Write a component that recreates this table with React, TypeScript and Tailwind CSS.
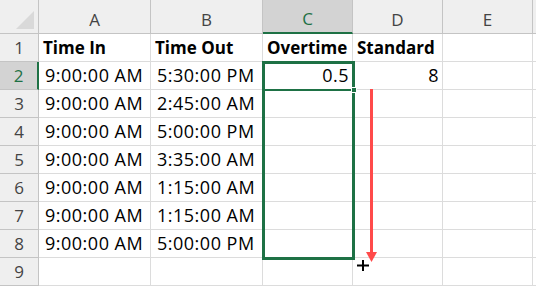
import React from 'react'

const cols = ['A', 'B', 'C', 'D', 'E']

const rows: string[][] = [
  ['Time In', 'Time Out', 'Overtime', 'Standard', ''],
  ['9:00:00 AM', '5:30:00 PM', '0.5', '8', ''],
  ['9:00:00 AM', '2:45:00 AM', '', '', ''],
  ['9:00:00 AM', '5:00:00 PM', '', '', ''],
  ['9:00:00 AM', '3:35:00 AM', '', '', ''],
  ['9:00:00 AM', '1:15:00 AM', '', '', ''],
  ['9:00:00 AM', '1:15:00 AM', '', '', ''],
  ['9:00:00 AM', '5:00:00 PM', '', '', ''],
  ['', '', '', '', ''],
]

// numeric cells are right aligned like Excel
const isNumber = (v: string) => /^[0-9.]+$/.test(v)

export default function App() {
  return (
    <div
      className="relative w-[536px] h-[286px] overflow-hidden bg-white text-[17px] text-black"
      style={{ fontFamily: '"Open Sans", "Noto Sans", sans-serif' }}
    >
      <div className="grid grid-cols-[39px_112px_112px_90px_90px_90px_1fr]">
        {/* header row */}
        <div className="relative h-[34px] bg-[#efefef] border-r border-b border-[#c4c4c4]">
          <div className="absolute right-[4px] bottom-[4px] w-0 h-0 border-l-[18px] border-l-transparent border-b-[18px] border-b-[#d9d9d9]" />
        </div>
        {cols.map((c) => (
          <div
            key={c}
            className={
              c === 'C'
                ? 'h-[34px] flex items-center justify-center pt-[6px] bg-[#d3d3d3] text-[#1e7145] border-r border-[#c4c4c4] border-b-2 border-b-[#1e7145]'
                : 'h-[34px] flex items-center justify-center pt-[6px] bg-[#efefef] text-[#444] border-r border-b border-[#c4c4c4]'
            }
          >
            {c}
          </div>
        ))}
        <div className="h-[34px] bg-[#efefef] border-b border-[#c4c4c4]" />

        {rows.map((r, i) => (
          <React.Fragment key={i}>
            <div
              className={
                i === 1
                  ? 'h-[28px] flex items-center justify-center bg-[#d3d3d3] text-[#1e7145] border-b border-[#c4c4c4] border-r-2 border-r-[#1e7145]'
                  : 'h-[28px] flex items-center justify-center bg-[#efefef] text-[#444] border-r border-b border-[#c4c4c4]'
              }
            >
              {i + 1}
            </div>
            {r.map((v, j) => (
              <div
                key={j}
                className={
                  'h-[28px] flex items-center whitespace-nowrap overflow-visible border-r border-b border-[#dcdcdc] ' +
                  (i === 0 ? 'font-bold pl-[4px] ' : 'text-[18px] tracking-[0.5px] ') +
                  (isNumber(v) ? 'justify-end pr-[3px]' : i === 0 ? '' : 'pl-[6px]')
                }
              >
                {v}
              </div>
            ))}
            <div className="h-[28px] border-b border-[#dcdcdc]" />
          </React.Fragment>
        ))}
      </div>

      {/* selection box C2:C8 */}
      <div className="absolute left-[262px] top-[61px] w-[93px] h-[199px] border-[3px] border-[#1e7145]" />
      {/* active cell bottom edge */}
      <div className="absolute left-[263px] top-[89px] w-[90px] h-[2px] bg-[#1e7145]" />
      {/* fill handle */}
      <div className="absolute left-[351px] top-[87px] w-[6px] h-[6px] bg-[#1e7145] border border-white" />

      {/* red drag arrow */}
      <svg className="absolute left-[362px] top-[88px]" width="20" height="176" viewBox="0 0 20 176">
        <line x1="9.5" y1="1" x2="9.5" y2="166" stroke="#ff4a4a" strokeWidth="3" />
        <polygon points="4,164 15,164 9.5,174" fill="#ff4a4a" />
      </svg>

      {/* crosshair cursor */}
      <svg className="absolute left-[356px] top-[259px]" width="14" height="13" viewBox="0 0 14 13">
        <line x1="7" y1="1" x2="7" y2="12" stroke="#000" strokeWidth="2" />
        <line x1="1" y1="6.5" x2="13" y2="6.5" stroke="#000" strokeWidth="2" />
      </svg>
    </div>
  )
}
